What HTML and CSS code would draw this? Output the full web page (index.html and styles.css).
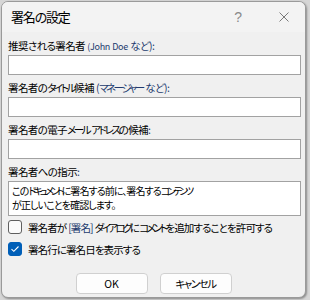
FILE: index.html
```html
<!DOCTYPE html>
<html lang="ja">
<head>
<meta charset="utf-8">
<link rel="stylesheet" href="styles.css">
</head>
<body>
<div class="window">
  <div class="titlebar">
    <span class="title">署名の設定</span>
    <span class="help">?</span>
    <span class="close">
      <svg width="10" height="10" viewBox="0 0 10 10"><path d="M0.5 0.5 L9.5 9.5 M9.5 0.5 L0.5 9.5" stroke="#7a7a7a" stroke-width="1" fill="none"/></svg>
    </span>
  </div>
  <div class="content">
    <div class="label">推奨される署名者 <span class="accent latin">(John Doe</span> <span class="accent">など):</span></div>
    <div class="input"></div>
    <div class="label">署名者の<span class="kt">タイトル</span>候補 <span class="accent">(<span class="kt">マネージャー</span> など):</span></div>
    <div class="input"></div>
    <div class="label">署名者の電子<span class="kt">メール</span> <span class="kt">アドレス</span>の候補<span class="accent">:</span></div>
    <div class="input"></div>
    <div class="label">署名者への指示<span class="accent">:</span></div>
    <div class="textarea">この<span class="kt">ドキュメント</span>に署名する前に、署名する<span class="kt">コンテンツ</span><br>が正しいことを確認します。</div>
    <div class="check-row">
      <span class="box"></span>
      <span class="check-label">署名者が <span class="accent">[署名]</span> <span class="kt">ダイアログ</span>に<span class="kt">コメント</span>を追加することを許可する</span>
    </div>
    <div class="check-row">
      <span class="box checked">
        <svg width="10" height="8" viewBox="0 0 10 8"><path d="M1.5 4.2 L3.8 6.3 L8.5 1.5" stroke="#ffffff" stroke-width="1.1" fill="none"/></svg>
      </span>
      <span class="check-label">署名行に署名日を表示する</span>
    </div>
    <div class="buttons">
      <div class="btn">OK</div>
      <div class="btn"><span class="kt">キャンセル</span></div>
    </div>
  </div>
</div>
</body>
</html>
```
FILE: styles.css
```css
html, body {
  margin: 0;
  padding: 0;
}
body {
  width: 310px;
  height: 300px;
  background: #d6d6d6;
  font-family: "Noto Sans CJK JP", "Noto Sans", sans-serif;
  font-feature-settings: "palt" 1;
  color: #000;
  overflow: hidden;
}
.window {
  box-sizing: border-box;
  margin: 1px 0 0 1px;
  width: 305px;
  height: 297px;
  border: 1px solid #9a9a9a;
  border-radius: 7px;
  background: #f0f0f0;
  overflow: hidden;
  box-shadow: 1px 1px 2px rgba(0,0,0,0.35);
}
.titlebar {
  height: 30px;
  background: #f3f3f3;
  display: flex;
  align-items: center;
  padding-left: 9px;
  padding-right: 16px;
}
.title {
  font-size: 13px;
  letter-spacing: -1.2px;
  flex: 1;
  line-height: 16px;
}
.help {
  color: #8a8a8a;
  font-family: "Liberation Sans", sans-serif;
  font-size: 14px;
  margin-right: 37px;
}
.close {
  display: flex;
  align-items: center;
}
.content {
  padding: 5px 4px 0 6px;
  display: flex;
  flex-direction: column;
}
.label {
  font-size: 10.5px;
  letter-spacing: -0.6px;
  word-spacing: 0.5px;
  line-height: 18px;
  height: 18px;
  white-space: nowrap;
}
.kt {
  letter-spacing: -2.4px;
}
.latin {
  font-size: 9px;
  letter-spacing: -0.3px;
}
.accent {
  color: #223a6e;
}
.input {
  box-sizing: border-box;
  height: 20px;
  background: #fff;
  border: 1px solid #a2a2a2;
  margin-bottom: 4px;
}
.textarea {
  box-sizing: border-box;
  height: 35px;
  background: #fff;
  border: 1px solid #a2a2a2;
  font-size: 10px;
  letter-spacing: -0.9px;
  line-height: 14px;
  padding: 2px 3px;
  white-space: nowrap;
}
.textarea .kt {
  letter-spacing: -3px;
}
.check-row {
  display: flex;
  align-items: center;
  height: 22px;
  gap: 6px;
}
.box {
  flex-shrink: 0;
  box-sizing: border-box;
  width: 14px;
  height: 14px;
  border: 1px solid #5f5f5f;
  border-radius: 3px;
  background: #fbfbfb;
  display: flex;
  align-items: center;
  justify-content: center;
}
.box.checked {
  background: #005fb8;
  border-color: #005fb8;
}
.check-label {
  font-size: 10.5px;
  letter-spacing: -0.9px;
  word-spacing: 0.5px;
  white-space: nowrap;
}
.check-label .kt {
  letter-spacing: -2.6px;
}
.buttons {
  display: flex;
  justify-content: center;
  gap: 12px;
  margin-top: 13px;
  padding-right: 2px;
}
.btn {
  box-sizing: border-box;
  width: 72px;
  height: 21px;
  background: #fdfdfd;
  border: 1px solid #d0d0d0;
  border-radius: 4px;
  font-size: 10.5px;
  line-height: 19px;
  text-align: center;
}
.btn .kt {
  letter-spacing: -1.5px;
}
```
